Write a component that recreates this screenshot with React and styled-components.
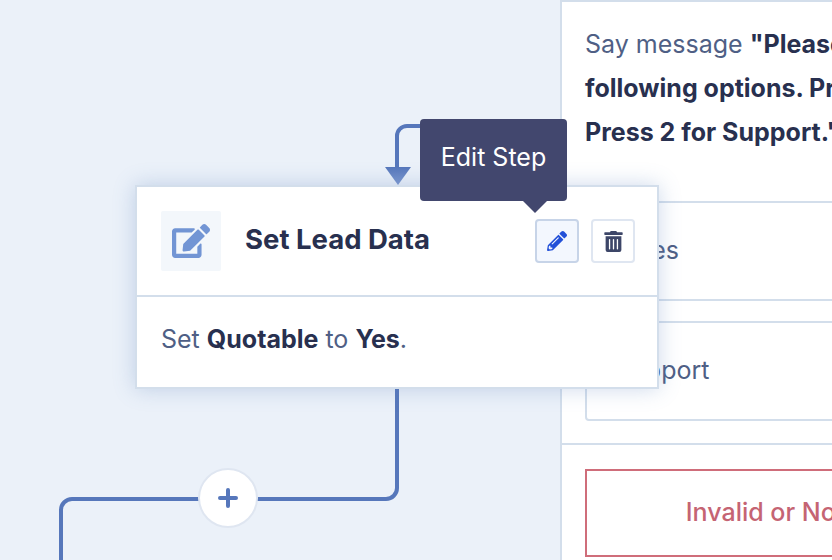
import React from 'react';
import styled, { createGlobalStyle } from 'styled-components';
import { FaEdit, FaPencilAlt, FaTrashAlt } from 'react-icons/fa';

const GlobalStyle = createGlobalStyle`
  html, body {
    margin: 0;
    height: 100%;
    overflow: hidden;
    background: #ebf1f9;
    font-family: Inter, "Liberation Sans", sans-serif;
  }
  #root { height: 100%; }
  * { box-sizing: border-box; }
`;

const PlusIcon = () => (
  <svg width="20" height="20" viewBox="0 0 20 20">
    <path d="M10 2v16M2 10h16" stroke="#5677bb" strokeWidth="4" strokeLinecap="round" />
  </svg>
);

const Wires = () => (
  <WireLayer width="560" height="560" viewBox="0 0 560 560">
    <defs>
      <linearGradient id="arrowFill" x1="0" y1="0" x2="0" y2="1">
        <stop offset="0" stopColor="#5677bb" />
        <stop offset="1" stopColor="#7f9ad0" />
      </linearGradient>
    </defs>
    <path d="M425 126H407a10 10 0 0 0-10 10v32" fill="none" stroke="#5677bb" strokeWidth="4" />
    <path d="M385 167h26l-13 18z" fill="url(#arrowFill)" />
    <path d="M397 385V488a11 11 0 0 1-11 11H72a11 11 0 0 0-11 11V560" fill="none" stroke="#5677bb" strokeWidth="4" />
  </WireLayer>
);

const App = () => {
  return (
    <>
      <GlobalStyle />
      <Page>
        <Canvas>
          <Wires />
          <AddButton><PlusIcon /></AddButton>
        </Canvas>
        <Panel>
          <Message>
            Say message <b>"Please select one of the following options. Press 1 for Sales. Press 2 for Support."</b>
          </Message>
          <Options>
            <Option>Sales</Option>
            <Option>Support</Option>
          </Options>
          <Fallback>
            <FallbackBox>Invalid or No Response</FallbackBox>
          </Fallback>
        </Panel>
        <StepCard>
          <CardHeader>
            <IconTile><FaEdit size={38} color="#7295d4" /></IconTile>
            <CardTitle>Set Lead Data</CardTitle>
            <Actions>
              <ActionButton $active><FaPencilAlt size={20} color="#2250d8" /></ActionButton>
              <ActionButton><FaTrashAlt size={21} color="#3d4668" /></ActionButton>
            </Actions>
          </CardHeader>
          <CardBody>
            Set <b>Quotable</b> to <b>Yes</b>.
          </CardBody>
        </StepCard>
        <Tooltip>Edit Step</Tooltip>
      </Page>
    </>
  );
};

const Page = styled.div`
  position: relative;
  display: flex;
  width: 832px;
  height: 560px;
  overflow: hidden;
`;

const Canvas = styled.div`
  position: relative;
  flex: 0 0 560px;
  height: 100%;
`;

const WireLayer = styled.svg`
  position: absolute;
  inset: 0;
`;

const AddButton = styled.button`
  position: absolute;
  left: 198px;
  top: 468px;
  display: flex;
  align-items: center;
  justify-content: center;
  width: 60px;
  height: 60px;
  padding: 0;
  background: #fff;
  border: 2px solid #dfe6f1;
  border-radius: 50%;
`;

const Panel = styled.div`
  flex: 0 0 550px;
  background: #fff;
  border-top: 2px solid #d3deeb;
  border-left: 2px solid #d3deeb;
`;

const Message = styled.div`
  height: 199px;
  padding: 20px 23px;
  font-size: 25px;
  line-height: 44px;
  color: #4f5f85;

  b {
    font-weight: 700;
    color: #28304f;
  }
`;

const Options = styled.div`
  display: flex;
  flex-direction: column;
  gap: 20px;
  padding: 0 23px 22px;
  border-bottom: 2px solid #d3deeb;
`;

const Option = styled.div`
  display: flex;
  align-items: center;
  height: 100px;
  padding: 0 0 3px 28px;
  font-size: 25px;
  color: #4f5f85;
  border: 2px solid #d3deeb;
  border-radius: 4px;
`;

const Fallback = styled.div`
  padding: 24px 23px 0;
`;

const FallbackBox = styled.div`
  display: flex;
  align-items: center;
  justify-content: center;
  height: 88px;
  padding: 0 26px 3px 0;
  font-size: 25px;
  font-weight: 500;
  white-space: nowrap;
  color: #c56473;
  border: 2px solid #cf6d7a;
`;

const StepCard = styled.div`
  position: absolute;
  left: 135px;
  top: 185px;
  width: 524px;
  height: 204px;
  background: #fff;
  border: 2px solid #d3deeb;
  box-shadow: 0 0 20px rgba(90, 130, 190, 0.3);
`;

const CardHeader = styled.div`
  display: flex;
  align-items: center;
  height: 110px;
  padding: 0 22px 0 24px;
  border-bottom: 2px solid #d3deeb;
`;

const IconTile = styled.div`
  display: flex;
  align-items: center;
  justify-content: center;
  width: 60px;
  height: 60px;
  background: #f3f7fb;
  border-radius: 2px;
`;

const CardTitle = styled.div`
  flex: 1;
  margin: 0 0 4px 24px;
  font-size: 27.5px;
  font-weight: 700;
  color: #28304f;
`;

const Actions = styled.div`
  display: flex;
  gap: 12px;
`;

const ActionButton = styled.button`
  display: flex;
  align-items: center;
  justify-content: center;
  width: 44px;
  height: 44px;
  padding: 0;
  background: ${(p) => (p.$active ? '#f3f7fe' : '#fff')};
  border: 2px solid ${(p) => (p.$active ? '#c7d4e8' : '#dfe6f1')};
  border-radius: 4px;
`;

const CardBody = styled.div`
  padding: 26px 24px;
  font-size: 25px;
  line-height: 32px;
  color: #4f5f85;

  b {
    font-weight: 700;
    color: #28304f;
  }
`;

const Tooltip = styled.div`
  position: absolute;
  left: 420px;
  top: 119px;
  display: flex;
  align-items: center;
  justify-content: center;
  width: 147px;
  height: 82px;
  padding-bottom: 7px;
  font-size: 25px;
  color: #fff;
  background: #42476e;
  border-radius: 4px;

  &::after {
    content: '';
    position: absolute;
    left: 103px;
    bottom: -12px;
    border-top: 12px solid #42476e;
    border-left: 12px solid transparent;
    border-right: 12px solid transparent;
  }
`;

export default App;
